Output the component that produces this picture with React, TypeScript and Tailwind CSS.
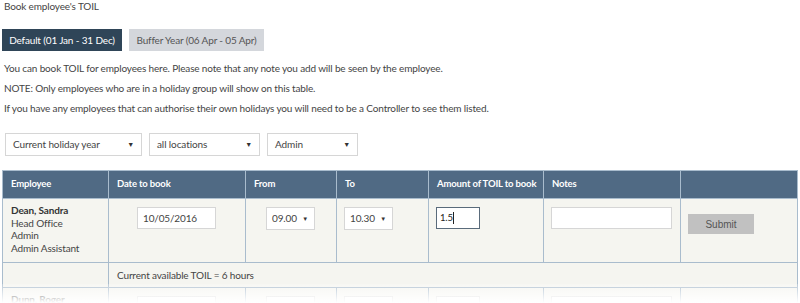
import React from 'react';

const font = { fontFamily: 'Lato, "Open Sans", sans-serif' };

function FakeSelect({ label, className }: { label: string; className: string }) {
    return (
        <div className={`flex items-center justify-between h-[23px] bg-white border border-[#d6d6d6] pl-[7px] pr-[7px] text-[10px] tracking-[-0.1px] text-[#444] ${className}`}>
            <span>{label}</span>
            <span className="text-[7px] text-[#333]">▼</span>
        </div>
    );
}

function TimeSelect({ value }: { value: string }) {
    return (
        <div className="flex items-center justify-between h-[23px] w-[49px] bg-white border border-[#d6d6d6] pl-[5px] pr-[6px] text-[10px] text-[#444]">
            <span>{value}</span>
            <span className="text-[6px] text-[#333]">▼</span>
        </div>
    );
}

const cell = 'border border-[#a9bccd]';

export default function App() {
    return (
        <div className="w-[800px] h-[303px] overflow-hidden bg-white text-[#444] relative tracking-[-0.15px]" style={font}>
            <div className="pl-[4px] text-[10px] leading-[12px]">Book employee's TOIL</div>

            {/* Tabs */}
            <div className="flex gap-[7px] pl-[2px] mt-[17px] whitespace-nowrap">
                <div className="h-[22px] w-[120px] bg-[#2f4558] text-white text-[10px] flex items-center justify-center">
                    Default (01 Jan - 31 Dec)
                </div>
                <div className="h-[22px] w-[135px] bg-[#d4d7dc] text-[#555] text-[10px] flex items-center justify-center">
                    Buffer Year (06 Apr - 05 Apr)
                </div>
            </div>

            {/* Info */}
            <div className="pl-[4px] mt-[7px] text-[10px] leading-[20px] flex flex-col">
                <p>You can book TOIL for employees here. Please note that any note you add will be seen by the employee.</p>
                <p>NOTE: Only employees who are in a holiday group will show on this table.</p>
                <p>If you have any employees that can authorise their own holidays you will need to be a Controller to see them listed.</p>
            </div>

            {/* Filters */}
            <div className="flex gap-[7px] pl-[5px] mt-[15px]">
                <FakeSelect label="Current holiday year" className="w-[137px]" />
                <FakeSelect label="all locations" className="w-[111px]" />
                <FakeSelect label="Admin" className="w-[91px]" />
            </div>

            {/* Table */}
            <table className="ml-[2px] mt-[14px] w-[795px] border-collapse table-fixed text-[10px]">
                <colgroup>
                    <col className="w-[106px]" />
                    <col className="w-[137px]" />
                    <col className="w-[91px]" />
                    <col className="w-[92px]" />
                    <col className="w-[115px]" />
                    <col className="w-[137px]" />
                    <col className="w-[117px]" />
                </colgroup>
                <thead>
                    <tr className="h-[28px] bg-[#506a84] text-white text-[9.5px] text-left whitespace-nowrap">
                        <th className={`${cell} pl-[8px] font-bold`}>Employee</th>
                        <th className={`${cell} pl-[8px] font-bold`}>Date to book</th>
                        <th className={`${cell} pl-[8px] font-bold`}>From</th>
                        <th className={`${cell} pl-[8px] font-bold`}>To</th>
                        <th className={`${cell} pl-[8px] font-bold`}>Amount of TOIL to book</th>
                        <th className={`${cell} pl-[8px] font-bold`}>Notes</th>
                        <th className={cell}></th>
                    </tr>
                </thead>
                <tbody className="bg-[#f5f5f0]">
                    <tr className="h-[64px] align-top">
                        <td className={`${cell} pl-[8px] pt-[5px] leading-[12.5px]`}>
                            <div className="font-bold text-[#333]">Dean, Sandra</div>
                            <div>Head Office</div>
                            <div>Admin</div>
                            <div>Admin Assistant</div>
                        </td>
                        <td className={`${cell} pt-[8px] pl-[28px]`}>
                            <div className="h-[22px] w-[79px] bg-white border border-[#d6d6d6] pl-[5px] flex items-center">10/05/2016</div>
                        </td>
                        <td className={`${cell} pt-[8px] pl-[20px]`}>
                            <TimeSelect value="09.00" />
                        </td>
                        <td className={`${cell} pt-[8px] pl-[7px]`}>
                            <TimeSelect value="10.30" />
                        </td>
                        <td className={`${cell} pt-[8px] pl-[7px]`}>
                            <div className="h-[22px] w-[44px] bg-white border border-[#5a6b7b] pl-[3px] flex items-center text-[9.5px] text-[#222]">
                                1.5<span className="inline-block w-px h-[12px] bg-[#222]" />
                            </div>
                        </td>
                        <td className={`${cell} pt-[8px] pl-[7px]`}>
                            <div className="h-[22px] w-[121px] bg-white border border-[#d6d6d6]" />
                        </td>
                        <td className={`${cell} pt-[15px] pl-[7px]`}>
                            <button className="h-[20px] w-[66px] bg-[#c1c1c1] text-[#555] text-[10px] tracking-normal" style={{ fontFamily: '"Liberation Sans", Arial, sans-serif' }}>
                                Submit
                            </button>
                        </td>
                    </tr>
                    <tr className="h-[25px]">
                        <td className={cell}></td>
                        <td colSpan={6} className={`${cell} pl-[8px]`}>Current available TOIL = 6 hours</td>
                    </tr>
                    <tr className="h-[40px] align-top">
                        <td className={`${cell} pl-[8px] pt-[4px] font-bold text-[#333]`}>Dunn, Roger</td>
                        <td className={`${cell} pt-[8px] pl-[28px]`}>
                            <div className="h-[22px] w-[79px] bg-white border border-[#d6d6d6]" />
                        </td>
                        <td className={`${cell} pt-[8px] pl-[20px]`}>
                            <div className="h-[22px] w-[49px] bg-white border border-[#d6d6d6]" />
                        </td>
                        <td className={`${cell} pt-[8px] pl-[7px]`}>
                            <div className="h-[22px] w-[49px] bg-white border border-[#d6d6d6]" />
                        </td>
                        <td className={`${cell} pt-[8px] pl-[7px]`}>
                            <div className="h-[22px] w-[44px] bg-white border border-[#d6d6d6]" />
                        </td>
                        <td className={`${cell} pt-[8px] pl-[7px]`}>
                            <div className="h-[22px] w-[121px] bg-white border border-[#d6d6d6]" />
                        </td>
                        <td className={cell}></td>
                    </tr>
                </tbody>
            </table>

            {/* fade-out at bottom */}
            <div className="absolute left-0 right-0 top-[284px] h-[19px] bg-gradient-to-b from-white/20 to-white" />
        </div>
    );
}
